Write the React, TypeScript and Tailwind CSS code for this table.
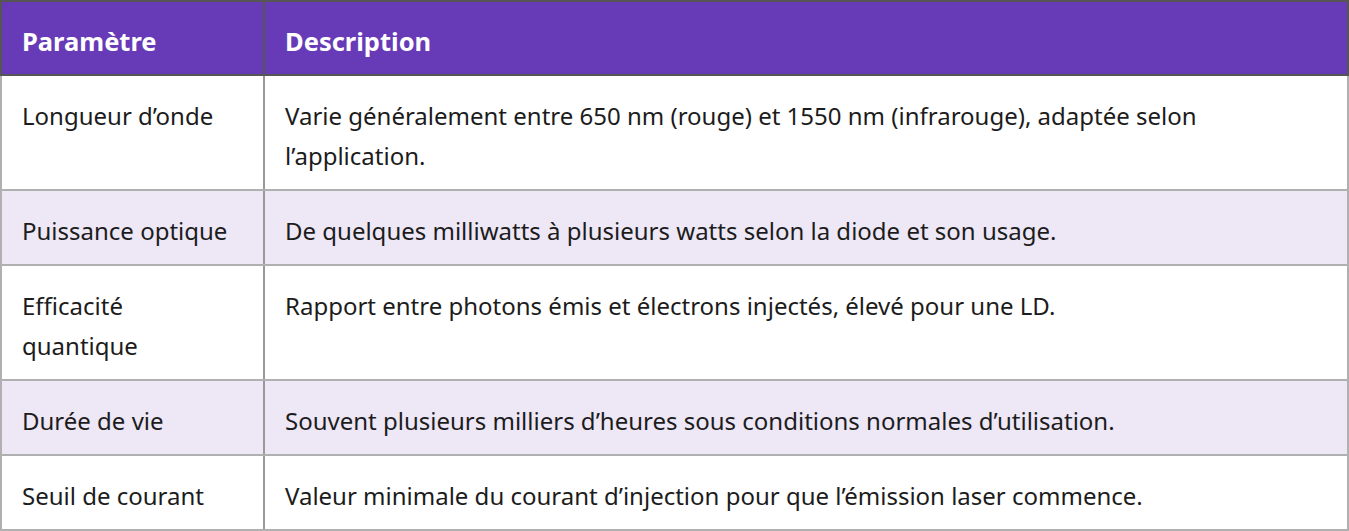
import React from 'react'

const rows = [
    { param: 'Longueur d’onde', desc: 'Varie généralement entre 650 nm (rouge) et 1550 nm (infrarouge), adaptée selon l’application.' },
    { param: 'Puissance optique', desc: 'De quelques milliwatts à plusieurs watts selon la diode et son usage.' },
    { param: 'Efficacité quantique', desc: 'Rapport entre photons émis et électrons injectés, élevé pour une LD.' },
    { param: 'Durée de vie', desc: 'Souvent plusieurs milliers d’heures sous conditions normales d’utilisation.' },
    { param: 'Seuil de courant', desc: 'Valeur minimale du courant d’injection pour que l’émission laser commence.' },
]

export default function App() {
    return (
        <div className="bg-white font-['Segoe_UI','Noto_Sans',sans-serif] text-[#1c1c1c]">
            <table className="w-[1349px] border-collapse table-fixed text-[24px] leading-[40px]">
                <colgroup>
                    <col className="w-[263px]" />
                    <col />
                </colgroup>
                <thead>
                    <tr className="bg-[#673ab7] text-white h-[74px]">
                        <th className="border-2 border-[#555] px-5 pt-[5px] text-left font-bold text-[25.5px]">Paramètre</th>
                        <th className="border-2 border-[#555] px-5 pt-[5px] text-left font-bold text-[25.5px]">Description</th>
                    </tr>
                </thead>
                <tbody>
                    {rows.map((row, i) => (
                        <tr key={i} className={i % 2 === 1 ? 'bg-[#ede7f6]' : 'bg-white'}>
                            <td className="border-2 border-[#b0b0b0] border-r-[#999] pl-5 pr-8 pt-[20px] pb-[13px] align-top">{row.param}</td>
                            <td className="border-2 border-[#b0b0b0] px-5 pt-[20px] pb-[13px] align-top pr-[100px]">{row.desc}</td>
                        </tr>
                    ))}
                </tbody>
            </table>
        </div>
    )
}
